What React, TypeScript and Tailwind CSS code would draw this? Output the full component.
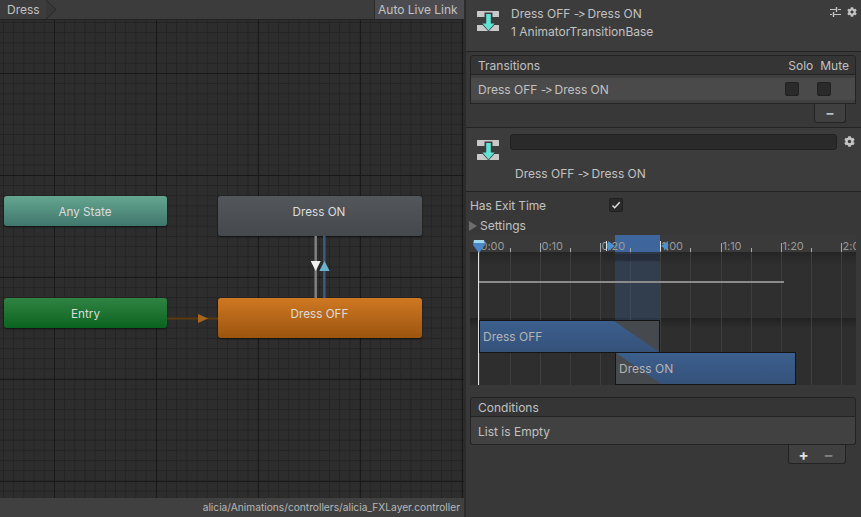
import { FaCog } from "react-icons/fa"

const majorTicks = [
  { x: 12.5, label: "0:00" },
  { x: 73.5, label: "0:10" },
  { x: 133.5, label: "0:20" },
  { x: 193.5, label: "1:00" },
  { x: 254.5, label: "1:10" },
  { x: 314.5, label: "1:20" },
  { x: 374.5, label: "2:00" },
]
const minorTicks = [43.5, 103.5, 163.5, 223.5, 284.5, 344.5]

function TransitionIcon() {
  return (
    <svg width="22" height="22" viewBox="0 0 22 22" className="shrink-0">
      <path d="M0.500 1h21a.5 .5 0 0 1 .5 .5v5a.5 .5 0 0 1-.5 .5H0.500a.5 .5 0 0 1-.5-.5v-5A.5 .5 0 0 1 .5 1z" fill="#c9c9c9" />
      <path d="M0.500 15h6l4.500 3 4.500-3h6a.5 .5 0 0 1 .5 .5v5a.5 .5 0 0 1-.5 .5H0.500a.5 .5 0 0 1-.5-.5v-5a.5 .5 0 0 1 .5-.5z" fill="#c9c9c9" />
      <path d="M7.500 2.500h8v9.500h4.500L11.500 21.500 3 12h4.500z" fill="#3c3c3c" />
      <path d="M9.200 4h4.600v9.500h3.700l-6 7-6-7h3.700z" fill="#5fe3d4" />
    </svg>
  )
}

function SlidersIcon() {
  return (
    <svg width="11" height="10" viewBox="0 0 11 10" className="shrink-0">
      <path d="M0 2.500h6M8 2.500h3M0 7.500h2M4 7.500h7" stroke="#c4c4c4" strokeWidth="1" />
      <path d="M6.500 0v5M3.500 5v5" stroke="#c4c4c4" strokeWidth="1.400" />
    </svg>
  )
}

function Check() {
  return <div className="h-[14px] w-[14px] rounded-[2px] border border-[#212121] bg-[#2a2a2a]" />
}

function TransitionName() {
  return (
    <span>
      Dress OFF <span className="tracking-[-1.5px]">-&gt;</span> Dress ON
    </span>
  )
}

function StateNode({ label, className }: { label: string; className: string }) {
  return (
    <div className={`absolute flex items-center justify-center rounded-[3px] text-[11.7px] text-[#dcdcdc] shadow-[0_1px_2px_rgba(0,0,0,0.6)] ${className}`}>
      {label}
    </div>
  )
}

function ListHeader({ children }: { children: React.ReactNode }) {
  return (
    <div className="ml-[4px] mr-[5px] flex h-[20px] items-center rounded-t-[3px] border border-[#232323] bg-[#353535] pl-[7px] pr-[6px] pt-[2px] text-[12px]">
      {children}
    </div>
  )
}

export default function App() {
  return (
    <div className="flex h-[517px] w-[861px] overflow-hidden bg-[#383838] font-['Inter',sans-serif] text-[12px] leading-none text-[#c2c2c2] [font-feature-settings:'calt'_0]">
      {/* animator graph */}
      <div className="flex w-[464px] shrink-0 flex-col">
        <div className="flex h-[20px] shrink-0 items-stretch justify-between border-b border-[#232323] bg-[#3c3c3c]">
          <div className="relative flex w-[57px] items-center pl-[7px]">
            Dress
            <svg width="11" height="19" viewBox="0 0 11 19" className="absolute right-0 top-0">
              <path d="M0 0l10 9.500L0 19" fill="#383838" stroke="#282828" />
            </svg>
          </div>
          <div className="flex w-[90px] items-center border-l border-[#2a2a2a] bg-[#4c4c50] pl-[3px]">Auto Live Link</div>
        </div>

        <div className="relative flex-1 overflow-hidden bg-[#2d2d2d] bg-[linear-gradient(#191919_1px,transparent_1px),linear-gradient(90deg,#191919_1px,transparent_1px),linear-gradient(#242424_1px,transparent_1px),linear-gradient(90deg,#242424_1px,transparent_1px)] bg-size-[102px_102px,102px_102px,10.2px_10.2px,10.2px_10.2px] bg-position-[0_53px,54px_0,0_2px,3px_0]">
          <StateNode label="Any State" className="left-[4px] top-[176px] h-[30px] w-[163px] bg-linear-to-b from-[#65a690] to-[#40776d] pr-[1px] pt-[3px]" />
          <StateNode label="Dress ON" className="left-[218px] top-[176px] h-[40px] w-[204px] bg-linear-to-b from-[#53565b] to-[#45484c] pb-[7px] pr-[2px]" />
          <StateNode label="Entry" className="left-[4px] top-[278px] h-[30px] w-[163px] bg-linear-to-b from-[#2f8443] to-[#08631f] pt-[3px]" />
          <StateNode label="Dress OFF" className="left-[218px] top-[278px] h-[40px] w-[204px] bg-linear-to-b from-[#cf7823] to-[#9c550e] pb-[7px] pr-[1px]" />
          <svg width="60" height="20" viewBox="0 0 60 20" className="absolute left-[165px] top-[290px]">
            <path d="M2 8.500h51" stroke="#5c3a10" strokeWidth="2" />
            <path d="M33 4l10 4.500-10 4.500z" fill="#a8661c" />
          </svg>
          <svg width="24" height="62" viewBox="0 0 24 62" className="absolute left-[307px] top-[216px]">
            <path d="M8.700 0v62" stroke="#808080" strokeWidth="2.500" />
            <path d="M17.300 0v62" stroke="#3b5a85" strokeWidth="2.500" />
            <path d="M3.700 25h10l-5 10z" fill="#f0f0f0" />
            <path d="M12.300 35h10.400l-5.200-10z" fill="#6ab0d0" />
          </svg>
        </div>

        <div className="flex h-[19px] shrink-0 items-center justify-end bg-[#404040] pr-[4px] text-[10.2px] text-[#b8b8b8]">
          alicia/Animations/controllers/alicia_FXLayer.controller
        </div>
      </div>
      <div className="w-[2px] shrink-0 bg-[#2c2c2c]" />

      {/* inspector */}
      <div className="flex min-w-0 flex-1 flex-col bg-[#383838]">
        <div className="flex h-[52px] shrink-0 items-start border-b border-[#232323] bg-[#3c3c3c] pl-[11px] pr-[4px] pt-[10px]">
          <TransitionIcon />
          <div className="-mt-[2px] ml-[12px] flex flex-1 flex-col gap-[6px]">
            <span className="leading-[12px]"><TransitionName /></span>
            <span className="leading-[12px]">1 AnimatorTransitionBase</span>
          </div>
          <div className="-mt-[3px] flex items-center gap-[6px]">
            <SlidersIcon />
            <FaCog className="h-[10px] w-[10px] text-[#c4c4c4]" />
          </div>
        </div>

        <div className="mt-[3px] shrink-0">
          <ListHeader>
            <span className="flex-1">Transitions</span>
            <span>Solo</span>
            <span className="ml-[7px]">Mute</span>
          </ListHeader>
          <div className="ml-[4px] mr-[5px] h-[29px] border-x border-b border-[#232323] bg-[#404040] py-[3px]">
            <div className="flex h-[22px] items-center bg-[#4a4a4a] pl-[7px] pr-[24px]">
              <span className="flex-1 pt-[2px]"><TransitionName /></span>
              <Check />
              <div className="w-[18px]" />
              <Check />
            </div>
          </div>
          <div className="mr-[15px] flex justify-end">
            <div className="flex h-[19px] w-[32px] items-center justify-center rounded-b-[3px] border-x border-b border-[#232323] bg-[#404040] text-[14px] font-bold text-[#bdbdbd]">−</div>
          </div>
        </div>

        <div className="mt-[4px] flex h-[65px] shrink-0 flex-col border-y border-[#232323] bg-[#3c3c3c]">
          <div className="flex items-start pl-[11px] pr-[6px] pt-[6px]">
            <div className="pt-[5px]">
              <TransitionIcon />
            </div>
            <div className="ml-[11px] h-[16px] flex-1 rounded-[3px] border border-[#212121] bg-[#2a2a2a]" />
            <FaCog className="ml-[7px] mt-[2px] h-[11px] w-[11px] text-[#c4c4c4]" />
          </div>
          <div className="pl-[49px] pt-[7px]"><TransitionName /></div>
        </div>

        <div className="flex h-[20px] shrink-0 items-center pl-[4px] pt-[7px]">
          <span className="w-[139px] tracking-[-0.12px]">Has Exit Time</span>
          <div className="-mt-[2px] flex h-[14px] w-[14px] items-center justify-center rounded-[2px] border border-[#212121] bg-[#2a2a2a]">
            <svg width="10" height="10" viewBox="0 0 10 10">
              <path d="M1.500 5.500l2.200 2.200 5-5.500" fill="none" stroke="#e0e0e0" strokeWidth="1.500" />
            </svg>
          </div>
        </div>
        <div className="flex h-[20px] shrink-0 items-center pl-[3px] pt-[7px]">
          <svg width="8" height="10" viewBox="0 0 8 10" className="mr-[3px]">
            <path d="M0 0l8 5-8 5z" fill="#6e6e6e" />
          </svg>
          Settings
        </div>

        {/* timeline */}
        <div className="relative ml-[4px] mr-[5px] mt-[3px] h-[150px] shrink-0 overflow-hidden bg-[#2f2f2f]">
          <div className="h-[17px] bg-[#3a3a3a]" />
          <div className="h-[66px] bg-linear-to-b from-[#252525] to-[#2f2f2f] to-20%" />
          <div className="h-[67px] bg-linear-to-b from-[#222222] to-[#2e2e2e] to-15%" />

          {majorTicks.concat(minorTicks.map((x) => ({ x, label: "" }))).map((t) => (
            <div key={t.x} className="absolute bottom-0 top-[17px] w-px bg-[#3e3e3e]" style={{ left: t.x - 4 }} />
          ))}

          <div className="absolute bottom-0 left-[145px] top-0 w-[45px] bg-[#3d6294]/30" />
          <div className="absolute left-[145px] top-[19px] h-[7px] w-[45px] bg-[#1f2630]/60" />
          <div className="absolute left-[145px] top-0 h-[17px] w-[45px] bg-[#3f669c]" />

          {majorTicks.map((t) => (
            <div key={t.label}>
              <div className="absolute top-[8px] h-[9px] w-px bg-[#a8a8a8]" style={{ left: t.x - 4 }} />
              <span className="absolute top-[6px] text-[11px] text-[#999999]" style={{ left: t.x - 2 }}>{t.label}</span>
            </div>
          ))}
          {minorTicks.map((x) => (
            <div key={x} className="absolute top-[13px] h-[4px] w-px bg-[#a8a8a8]" style={{ left: x - 4 }} />
          ))}

          <div className="absolute left-[8px] right-[72px] top-[46px] h-[2px] bg-[#8b8b8b]" />
          <div className="absolute bottom-0 left-[8px] top-[14px] w-px bg-[#e4e4e4]" />

          <svg width="12" height="13" viewBox="0 0 12 13" className="absolute left-[3px] top-[5px]">
            <path d="M1 0h10l1 5-6 8-6-8z" fill="#4a86c8" />
            <path d="M1 0h10l.5 3H.5z" fill="#9fd8ec" />
          </svg>
          <svg width="9" height="10" viewBox="0 0 9 10" className="absolute left-[136px] top-[6px]">
            <path d="M.5 0v10" stroke="#e0e0e0" />
            <path d="M2 0l7 5-7 5z" fill="#4a90d0" />
          </svg>
          <svg width="9" height="10" viewBox="0 0 9 10" className="absolute left-[190px] top-[6px]">
            <path d="M8 0L1 5l7 5z" fill="#4a90d0" />
            <path d="M.5 0v10" stroke="#e0e0e0" />
          </svg>

          <div className="absolute left-[9px] top-[85px] flex h-[33px] w-[181px] items-center border border-[#141414] bg-linear-to-b from-[#3c5f8d] to-[#35527a] pl-[3px] text-[12px] text-[#b4b4b4]">
            Dress OFF
            <svg width="45" height="31" viewBox="0 0 45 31" className="absolute right-0 top-0">
              <path d="M0 0h45v31z" fill="#46494d" />
            </svg>
          </div>
          <div className="absolute left-[145px] top-[117px] flex h-[33px] w-[181px] items-center border border-[#141414] bg-linear-to-b from-[#3c5f8d] to-[#35527a] pl-[3px] text-[12px] text-[#b4b4b4]">
            <svg width="45" height="31" viewBox="0 0 45 31" className="absolute left-0 top-0">
              <path d="M0 0v31h45z" fill="#46494d" />
            </svg>
            <span className="relative">Dress ON</span>
          </div>
        </div>

        <div className="mt-[12px] shrink-0">
          <ListHeader>Conditions</ListHeader>
          <div className="ml-[4px] mr-[5px] flex h-[28px] items-center rounded-b-[3px] border-x border-b border-[#232323] bg-[#414141] pl-[7px] pt-[2px]">List is Empty</div>
          <div className="mr-[15px] flex justify-end">
            <div className="flex h-[19px] w-[58px] items-center rounded-b-[3px] border-x border-b border-[#232323] bg-[#404040] pl-[2px] text-[15px] font-bold">
              <span className="w-[25px] text-center text-[#e0e0e0]">+</span>
              <span className="w-[25px] text-center text-[#808080]">−</span>
            </div>
          </div>
        </div>
      </div>
    </div>
  )
}
